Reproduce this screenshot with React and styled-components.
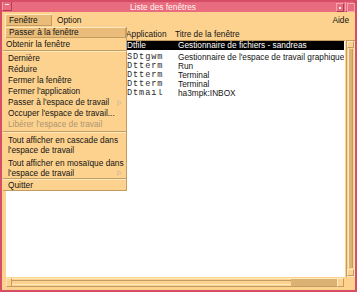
import React from "react";
import styled, { createGlobalStyle } from "styled-components";

const Global = createGlobalStyle`
  html, body { margin: 0; padding: 0; background: #ffffff; }
  body { width: 357px; height: 292px; overflow: hidden; }
  * { box-sizing: border-box; }
`;

const FONT = `"Liberation Sans", Arial, sans-serif`;
const MONO = `"Liberation Mono", "DejaVu Sans Mono", monospace`;

const C = {
  red: "#d64d66",
  title: "#e96b7e",
  titleLight: "#f6a3ae",
  orange: "#fdd28e",
  light: "#ffe9c0",
  tan: "#c59c60",
  active: "#e9bc7a",
  thumb: "#dbb274",
};

const Window = styled.div`
  position: relative;
  width: 357px;
  height: 292px;
  border: 2px solid ${C.red};
  background: ${C.orange};
  display: flex;
  flex-direction: column;
  font-family: ${FONT};
  font-size: 8.3px;
  color: #141414;
  overflow: hidden;
`;

const TitleBar = styled.div`
  height: 10px;
  background: ${C.title};
  display: flex;
  align-items: flex-start;
`;

const WinMenuBtn = styled.div`
  width: 10px;
  height: 10px;
  margin-top: -1px;
  border: 1px solid ${C.titleLight};
  border-right-color: #b83a52;
  border-bottom-color: #b83a52;
  position: relative;
  &::after {
    content: "";
    position: absolute;
    left: 2px;
    right: 2px;
    top: 2px;
    height: 1px;
    background: #fff0f0;
  }
`;

const Title = styled.div`
  flex: 1;
  text-align: center;
  color: #fff4f2;
  line-height: 10px;
  font-size: 8.4px;
  padding-right: 22px;
`;

const MinBtn = styled.div`
  width: 8px;
  height: 9px;
  margin: 1px 1px 0 0;
  border: 1px solid ${C.titleLight};
  border-right-color: #b83a52;
  border-bottom-color: #b83a52;
  display: flex;
  align-items: center;
  justify-content: center;
  &::after {
    content: "";
    width: 2px;
    height: 2px;
    background: #fff0f0;
  }
`;

const MaxBtn = styled.div`
  width: 10px;
  height: 11px;
  margin-top: -1px;
  border: 1px solid ${C.titleLight};
  border-right-color: #b83a52;
  border-bottom-color: #b83a52;
  padding: 1px;
  &::after {
    content: "";
    display: block;
    width: 100%;
    height: 100%;
    border: 1px solid ${C.titleLight};
  }
`;

const MenuBar = styled.div`
  height: 16px;
  display: flex;
  align-items: center;
  padding: 0 6px 0 3px;
`;

const MenuTitle = styled.div`
  height: 12px;
  line-height: 12px;
  width: ${(p) => (p.$w ? `${p.$w}px` : "auto")};
  padding-left: 4px;
  margin-right: ${(p) => (p.$right ? "0" : "1px")};
  margin-left: ${(p) => (p.$right ? "auto" : "0")};
  background: ${(p) => (p.$active ? C.active : "transparent")};
  box-shadow: ${(p) =>
    p.$active ? `inset 1px 1px 0 ${C.light}, inset -1px -1px 0 ${C.tan}` : "none"};
`;

const Body = styled.div`
  display: flex;
  flex-direction: column;
  padding: 0 1px 0 4px;
`;

const Header = styled.div`
  height: 12px;
  line-height: 12px;
  display: grid;
  grid-template-columns: 120px 49px 1fr;
`;

const ListArea = styled.div`
  height: 237px;
  display: flex;
  gap: 1px;
`;

const ListBox = styled.div`
  flex: 1;
  background: #ffffff;
  border-top: 1px solid ${C.tan};
  padding: 0 1px 0 120px;
  display: flex;
  flex-direction: column;
`;

const Row = styled.div`
  display: grid;
  grid-template-columns: 52px 1fr;
  height: 9px;
  line-height: 9px;
  white-space: nowrap;
  overflow: hidden;
  background: ${(p) => (p.$selected ? "#000" : "transparent")};
  color: ${(p) => (p.$selected ? "#fff" : "#141414")};
  margin-bottom: ${(p) => (p.$selected ? "3px" : "0")};
`;

const AppCell = styled.span`
  font-family: ${(p) => (p.$selected ? FONT : MONO)};
  font-size: ${(p) => (p.$selected ? "8.3px" : "8.6px")};
  letter-spacing: ${(p) => (p.$selected ? "0" : "0.9px")};
  color: ${(p) => (p.$selected ? "#fff" : "#2a2a2a")};
  padding-left: 1px;
`;

const TitleCell = styled.span``;

const VScroll = styled.div`
  width: 9px;
  display: flex;
  flex-direction: column;
  background: ${C.orange};
  box-shadow: inset 1px 1px 0 ${C.tan}, inset -1px -1px 0 ${C.light};
  padding: 1px;
`;

const ArrowBox = styled.div`
  width: ${(p) => p.$w || 7}px;
  height: ${(p) => p.$h || 7}px;
  flex-shrink: 0;
  border: 1px solid ${C.light};
  border-right-color: ${C.tan};
  border-bottom-color: ${C.tan};
`;

const VThumb = styled.div`
  flex: 1;
  margin: 1px 1px;
  background: ${C.thumb};
  box-shadow: inset 1px 0 0 ${C.light}, inset -1px 0 0 ${C.tan};
`;

const HRow = styled.div`
  margin-top: 1px;
  height: 9px;
  display: flex;
`;

const HScroll = styled.div`
  flex: 1;
  display: flex;
  align-items: stretch;
  background: ${C.orange};
  box-shadow: inset 0 1px 0 ${C.light}, inset 0 -1px 0 ${C.tan};
`;

const HTrough = styled.div`
  flex: 1;
  margin: 2px 0;
  border-top: 1px solid ${C.tan};
  border-bottom: 1px solid ${C.light};
  display: flex;
  justify-content: flex-end;
`;

const HThumb = styled.div`
  width: 46px;
  background: ${C.thumb};
  margin: -2px 0;
`;

const Corner = styled.div`
  width: 10px;
`;

const Menu = styled.div`
  position: absolute;
  left: 1px;
  top: 25px;
  width: 124px;
  background: ${C.orange};
  border-right: 1px solid ${C.tan};
  border-bottom: 1px solid ${C.tan};
  display: flex;
  flex-direction: column;
`;

const Item = styled.div`
  position: relative;
  height: ${(p) => (p.$h ? `${p.$h}px` : "auto")};
  line-height: ${(p) => p.$lh || 11}px;
  padding: ${(p) => p.$pt || 0}px 0 ${(p) => p.$pb || 0}px ${(p) => p.$pl || 5}px;
  margin-left: ${(p) => (p.$active ? "2px" : "0")};
  color: ${(p) => (p.$disabled ? "#ad9574" : "#141414")};
  background: ${(p) => (p.$active ? C.active : "transparent")};
  box-shadow: ${(p) =>
    p.$active ? `inset 1px 1px 0 ${C.light}, inset -1px -1px 0 ${C.tan}` : "none"};
  white-space: nowrap;
`;

const Separator = styled.div`
  height: 2px;
  margin-top: ${(p) => p.$mt || 0}px;
  border-top: 1px solid ${C.tan};
  border-bottom: 1px solid ${C.light};
`;

const SubArrow = styled.svg`
  position: absolute;
  right: 4px;
  bottom: 2px;
`;

const Arrow = () => (
  <SubArrow width="5" height="6" viewBox="0 0 5 6">
    <path d="M0.5 0.5 L4.5 3 L0.5 5.5 Z" fill="#e8cda4" stroke="#d8b88a" strokeWidth="0.6" />
  </SubArrow>
);

const rows = [
  ["Dtfile", "Gestionnaire de fichiers - sandreas", true],
  ["SDtgwm", "Gestionnaire de l'espace de travail graphique"],
  ["Dtterm", "Run"],
  ["Dtterm", "Terminal"],
  ["Dtterm", "Terminal"],
  ["Dtmail", "ha3mpk:INBOX"],
];

export default function App() {
  return (
    <>
      <Global />
      <Window>
        <TitleBar>
          <WinMenuBtn />
          <Title>Liste des fenêtres</Title>
          <MinBtn />
          <MaxBtn />
        </TitleBar>
        <MenuBar>
          <MenuTitle $active $w={47}>Fenêtre</MenuTitle>
          <MenuTitle>Option</MenuTitle>
          <MenuTitle $right>Aide</MenuTitle>
        </MenuBar>
        <Body>
          <Header>
            <span />
            <span>Application</span>
            <span>Titre de la fenêtre</span>
          </Header>
          <ListArea>
            <ListBox>
              {rows.map(([app, title, sel], i) => (
                <Row key={i} $selected={sel}>
                  <AppCell $selected={sel}>{app}</AppCell>
                  <TitleCell>{title}</TitleCell>
                </Row>
              ))}
            </ListBox>
            <VScroll>
              <ArrowBox />
              <VThumb />
              <ArrowBox />
            </VScroll>
          </ListArea>
          <HRow>
            <HScroll>
              <ArrowBox $w={6} $h={9} />
              <HTrough>
                <HThumb />
              </HTrough>
              <ArrowBox $w={7} $h={9} />
            </HScroll>
            <Corner />
          </HRow>
        </Body>
        <Menu>
          <Item $active $h={11} $pl={4}>Passer à la fenêtre</Item>
          <Item $h={12} $lh={12} $pl={3}>Obtenir la fenêtre</Item>
          <Separator />
          <Item $pt={1} $h={12}>Dernière</Item>
          <Item $h={11}>Réduire</Item>
          <Item $h={11}>Fermer la fenêtre</Item>
          <Item $h={11}>Fermer l'application</Item>
          <Item $h={11}>
            Passer à l'espace de travail
            <Arrow />
          </Item>
          <Item $h={11}>Occuper l'espace de travail...</Item>
          <Item $h={11} $disabled>Libérer l'espace de travail</Item>
          <Separator $mt={1} />
          <Item $lh={10} $pt={2} $pb={1}>
            Tout afficher en cascade dans
            <br />
            l'espace de travail
          </Item>
          <Item $lh={10} $pt={2}>
            Tout afficher en mosaïque dans
            <br />
            l'espace de travail
            <Arrow />
          </Item>
          <Separator />
          <Item $h={10} $lh={10}>Quitter</Item>
        </Menu>
      </Window>
    </>
  );
}
